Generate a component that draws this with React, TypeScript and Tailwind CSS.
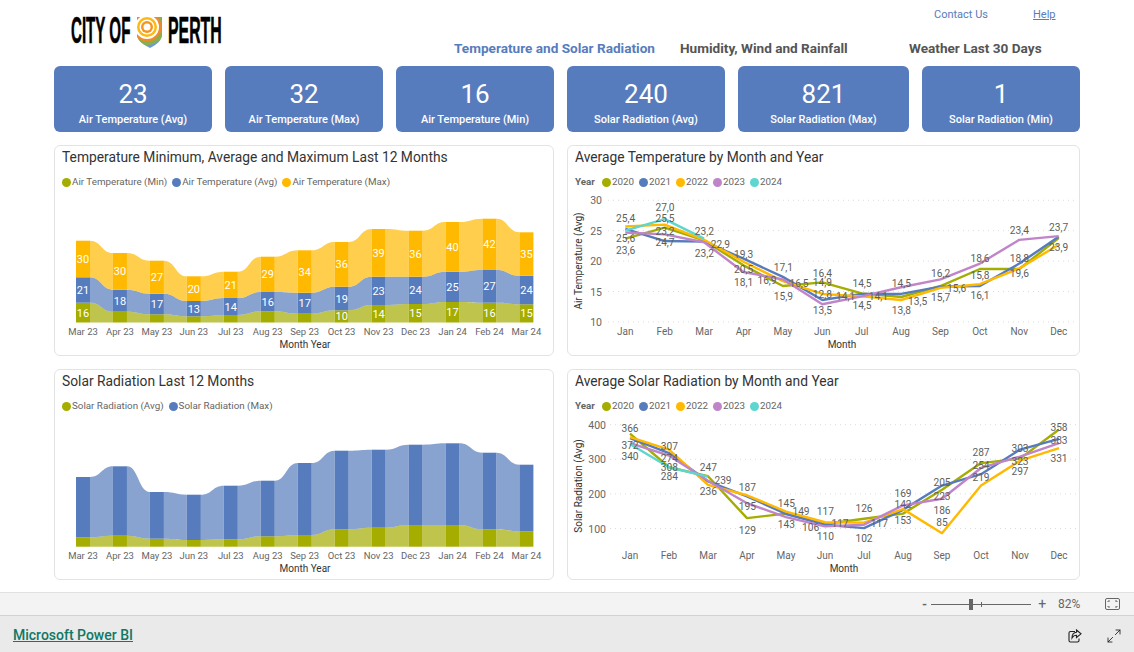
import { Maximize2 } from 'lucide-react';

const C = {
  green: '#a4ad00',
  blue: '#577cbd',
  yellow: '#ffb900',
  purple: '#c084c8',
  teal: '#5cd6cf',
};

const months12 = ['Mar 23', 'Apr 23', 'May 23', 'Jun 23', 'Jul 23', 'Aug 23', 'Sep 23', 'Oct 23', 'Nov 23', 'Dec 23', 'Jan 24', 'Feb 24', 'Mar 24'];
const monthNames = ['Jan', 'Feb', 'Mar', 'Apr', 'May', 'Jun', 'Jul', 'Aug', 'Sep', 'Oct', 'Nov', 'Dec'];
const kpis = [
  { value: '23', label: 'Air Temperature (Avg)', w: 'w-[158px]' },
  { value: '32', label: 'Air Temperature (Max)', w: 'w-[158px]' },
  { value: '16', label: 'Air Temperature (Min)', w: 'w-[158px]' },
  { value: '240', label: 'Solar Radiation (Avg)', w: 'w-[158px]' },
  { value: '821', label: 'Solar Radiation (Max)', w: 'w-[171px]' },
  { value: '1', label: 'Solar Radiation (Min)', w: 'w-[158px]' },
];

// ribbon tops, in page pixels
const tempBands = [
  { color: C.green, tops: [302.7, 311.7, 314.3, 316.3, 315, 311.3, 313.7, 310.3, 305, 304, 302, 302.7, 304.3] },
  { color: C.blue, tops: [277.3, 289.7, 293.7, 301, 298, 292, 292.7, 286.7, 276.7, 276.7, 271.7, 270, 275.7] },
  { color: C.yellow, tops: [240.7, 253, 260.7, 276.3, 271.7, 256.7, 250.3, 242, 229, 230.7, 222, 218.7, 232.3] },
];
const tempLabels = [
  ['16', '21', '30'], ['', '18', '30'], ['', '17', '27'], ['', '13', '20'], ['', '14', '21'], ['', '16', '29'], ['', '17', '34'],
  ['10', '19', '36'], ['14', '23', '39'], ['15', '24', '36'], ['17', '25', '40'], ['16', '27', '42'], ['15', '24', '35'],
];
const solarBands = [
  { color: C.green, tops: [537.3, 535.7, 538.7, 540, 539.3, 536.3, 535, 529.3, 527.7, 525, 525, 529.3, 531.3] },
  { color: C.blue, tops: [477, 466.3, 492, 494.7, 485.7, 480.7, 463, 450.7, 449.7, 444.7, 443.3, 452.7, 464.7] },
];

const tempLines = [
  { color: C.green, values: [23.7, 25.5, 23.4, 19.3, 15.9, 16.5, 14.7, 14.1, 15.9, 18.7, 18.7, 23.8] },
  { color: C.blue, values: [25.3, 23.3, 23.2, 20.4, 17.4, 13.6, 14.6, 14.6, 15.8, 15.9, 19.6, 24] },
  { color: C.yellow, values: [25.7, 26, 23.5, 19.9, 16.7, 14.6, 14.2, 13.6, 15.6, 16.2, 18.8, 22.7] },
  { color: C.purple, values: [24.7, 24.4, 23.1, 18.2, 17, 12.9, 14.2, 15.7, 17, 19.6, 23.5, 24.1] },
  { color: C.teal, values: [25, 26.9, 23.7] },
];
const solarLines = [
  { color: C.green, values: [374, 277, 251, 130, 143, 113, 128, 143, 212, 289, 302, 386] },
  { color: C.blue, values: [361, 318, 236, 193, 142, 111, 101, 154, 224, 257, 328, 359] },
  { color: C.yellow, values: [364, 328, 226, 196, 149, 118, 117, 156, 86, 224, 296, 332] },
  { color: C.purple, values: [347, 311, 238, 173, 133, 106, 111, 167, 186, 275, 308, 347] },
  { color: C.teal, values: [344, 277, 250] },
];

// label: text, x, y (page pixels, text centre)
const tempPoints: [string, number, number][] = [
  ['25,4', 625.7, 217.7], ['25,6', 625.7, 238], ['23,6', 625.7, 249.7], ['27,0', 665, 207.3], ['25,5', 665, 217.7], ['23,2', 665, 230.7], ['24,7', 665, 242.3],
  ['23,2', 704.3, 230.7], ['22,9', 720.3, 243.7], ['23,2', 704.3, 252.7], ['19,3', 743.7, 254.3], ['20,5', 743.7, 268.7], ['18,1', 743.7, 282.3], ['16,9', 767, 279.7],
  ['17,1', 783.3, 267.3], ['15,9', 783.3, 296.3], ['16,5', 799, 282.7], ['16,4', 822.3, 272.7], ['14,9', 822.3, 281.7], ['12,8', 822.3, 293.7], ['13,5', 822.3, 310.3],
  ['14,1', 845.7, 296.3], ['14,5', 862, 283.3], ['14,5', 862, 305], ['14,1', 878.3, 296.3], ['14,5', 901.3, 283.3], ['13,8', 901.3, 309.7], ['13,5', 917.7, 300.7],
  ['16,2', 940.7, 273.3], ['15,7', 940.7, 297.3], ['15,6', 956.7, 287.7], ['18,6', 980, 258.3], ['15,8', 980, 275.3], ['16,1', 980, 295.3], ['18,8', 1019.3, 257.7],
  ['19,6', 1019.3, 273.3], ['23,4', 1019.3, 229.7], ['23,7', 1058.7, 227.3], ['23,9', 1058.7, 247.3],
];
const solarPoints: [string, number, number][] = [
  ['366', 630, 427.7], ['372', 630, 444.7], ['340', 630, 455.7], ['307', 669.3, 445.7], ['274', 669.3, 457.7], ['308', 669.3, 467], ['284', 669.3, 475.7],
  ['247', 708.3, 466.7], ['239', 723, 480.3], ['236', 708.3, 491.3], ['187', 747.3, 487.3], ['195', 747.3, 506.3], ['129', 747.3, 529.7], ['145', 786.3, 502.7],
  ['149', 801, 511.3], ['143', 786.3, 523.7], ['106', 810.7, 526.7], ['117', 825.3, 511.3], ['110', 825.3, 535.7], ['117', 840, 522.7], ['126', 864, 508.3],
  ['102', 864, 538.3], ['117', 879.3, 522.7], ['169', 903, 493.3], ['142', 903, 503.7], ['153', 903, 520.3], ['205', 942, 481.7], ['223', 942, 496.3], ['186', 942, 509.7],
  ['85', 942, 522.3], ['287', 981, 452.3], ['254', 981, 464.7], ['219', 981, 476.7], ['303', 1020, 447.7], ['323', 1020, 461.3], ['297', 1020, 470.7],
  ['358', 1059, 427.3], ['383', 1059, 440.3], ['331', 1059, 458.3],
];

function Legend({ title, items }: { title?: string; items: { color: string; label: string }[] }) {
  return (
    <div className="flex items-center h-[14px] mt-[7px] mb-[3px] ml-[7px] text-[9.8px] text-[#666666]">
      {title && <span className="font-bold mr-[7px]">{title}</span>}
      {items.map(item => (
        <span key={item.label} className="flex items-center mr-[5px]">
          <span className="w-[9px] h-[9px] rounded-full mr-[1px]" style={{ backgroundColor: item.color }} />
          {item.label}
        </span>
      ))}
    </div>
  );
}

function Panel({ title, width, children }: { title: string; width: string; children: React.ReactNode }) {
  return (
    <div className={`${width} h-[211px] border border-[#e3e3e3] rounded-[6px] bg-white overflow-hidden`}>
      <div className="h-[22px] ml-[7px] text-[13.8px] leading-[22px] text-[#333333]">{title}</div>
      {children}
    </div>
  );
}

function RibbonChart({ bands, labels, viewY, baseline, axisY }: {
  bands: { color: string; tops: number[] }[];
  labels?: string[][];
  viewY: number;
  baseline: number;
  axisY: number;
}) {
  const barX = (i: number) => 76 + i * 36.95;
  const barW = 14;
  return (
    <svg className="block w-[498px] h-[164px]" viewBox={`55 ${viewY} 498 164`}>
      {bands.map((band, b) => {
        const bottoms = band.tops.map((_, i) => (b === 0 ? baseline : bands[b - 1].tops[i]));
        return (
          <g key={b}>
            {band.tops.slice(0, -1).map((top, i) => {
              const x1 = barX(i) + barW;
              const x2 = barX(i + 1);
              const m = (x1 + x2) / 2;
              const d = `M${x1} ${top}C${m} ${top} ${m} ${band.tops[i + 1]} ${x2} ${band.tops[i + 1]}L${x2} ${bottoms[i + 1]}C${m} ${bottoms[i + 1]} ${m} ${bottoms[i]} ${x1} ${bottoms[i]}Z`;
              return <path key={i} d={d} fill={band.color} fillOpacity={0.7} />;
            })}
            {band.tops.map((top, i) => (
              <rect key={i} x={barX(i)} y={top} width={barW} height={bottoms[i] - top} fill={band.color} />
            ))}
          </g>
        );
      })}
      {labels && labels.map((row, i) =>
        row.map((text, b) => {
          if (!text) return null;
          const top = bands[b].tops[i];
          const bottom = b === 0 ? baseline : bands[b - 1].tops[i];
          return (
            <text key={b} x={barX(i) + 7} y={(top + bottom) / 2 + 4} textAnchor="middle" fontSize="11" fill="#ffffff">{text}</text>
          );
        }),
      )}
      {months12.map((m, i) => (
        <text key={i} x={barX(i) + 7} y={axisY} textAnchor="middle" fontSize="9.5" fill="#666666">{m}</text>
      ))}
      <text x={305} y={axisY + 13} textAnchor="middle" fontSize="10" fill="#333333">Month Year</text>
    </svg>
  );
}

function LineChart({ lines, points, viewY, gridX1, firstX, stepX, ticks, toY, yTitle, yTitleY, tickX, axisY, titleX }: {
  lines: { color: string; values: number[] }[];
  points: [string, number, number][];
  viewY: number;
  gridX1: number;
  firstX: number;
  stepX: number;
  ticks: number[];
  toY: (v: number) => number;
  yTitle: string;
  yTitleY: number;
  tickX: number;
  axisY: number;
  titleX: number;
}) {
  return (
    <svg className="block w-[511px] h-[164px]" viewBox={`568 ${viewY} 511 164`}>
      {ticks.map(t => (
        <g key={t}>
          <line x1={gridX1} x2={1076} y1={toY(t)} y2={toY(t)} stroke="#dcdcdc" strokeDasharray="1 4" />
          <text x={tickX} y={toY(t) + 4} textAnchor="end" fontSize="10.5" fill="#666666">{t}</text>
        </g>
      ))}
      {lines.map(line => (
        <polyline
          key={line.color}
          points={line.values.map((v, i) => `${firstX + i * stepX},${toY(v)}`).join(' ')}
          fill="none"
          stroke={line.color}
          strokeWidth="2.4"
          strokeLinejoin="round"
        />
      ))}
      {points.map(([text, x, y], i) => (
        <text key={i} x={x} y={y + 4} textAnchor="middle" fontSize="10.2" fill="#605e5c">{text}</text>
      ))}
      {monthNames.map((m, i) => (
        <text key={m} x={firstX + i * stepX} y={axisY} textAnchor="middle" fontSize="10" fill="#666666">{m}</text>
      ))}
      <text x={titleX} y={axisY + 13} textAnchor="middle" fontSize="10" fill="#333333">Month</text>
      <text transform={`translate(582 ${yTitleY}) rotate(-90)`} textAnchor="middle" fontSize="10" fill="#333333">{yTitle}</text>
    </svg>
  );
}

function Logo() {
  return (
    <div className="flex items-center h-[36px] ml-[71px] mt-[13px] font-['Liberation_Sans',sans-serif] font-bold text-black text-[36px] leading-none">
      <span className="w-[62px] shrink-0 whitespace-nowrap origin-left scale-x-[0.42] [-webkit-text-stroke:0.6px_black]">CITY OF</span>
      <svg className="shrink-0 w-[26px] h-[31px] ml-[4px] mt-[3px]" viewBox="0 0 26 31">
        <defs>
          <clipPath id="shield">
            <path d="M0 0H25V17C25 24 19 28 13 31C7 28 0 24 0 17Z" />
          </clipPath>
        </defs>
        <g clipPath="url(#shield)">
          <rect width="26" height="31" fill="#6b9bd6" />
          <circle cx="10" cy="10" r="18" fill="#8ab04a" />
          <circle cx="10" cy="10" r="14.5" fill="#ee8a2c" />
          <circle cx="10" cy="10" r="12" fill="#ffffff" />
          <circle cx="10" cy="10" r="10" fill="#fdb913" />
          <circle cx="10" cy="10" r="7.5" fill="#ffffff" />
          <circle cx="10" cy="10" r="6" fill="#f7941d" />
          <circle cx="10" cy="10" r="3.5" fill="#ffffff" />
        </g>
      </svg>
      <span className="w-[53px] shrink-0 ml-[5px] whitespace-nowrap origin-left scale-x-[0.44] [-webkit-text-stroke:0.6px_black]">PERTH</span>
    </div>
  );
}

export default function App() {
  const years = [
    { color: C.green, label: '2020' },
    { color: C.blue, label: '2021' },
    { color: C.yellow, label: '2022' },
    { color: C.purple, label: '2023' },
    { color: C.teal, label: '2024' },
  ];
  return (
    <div className="w-[1134px] h-[652px] flex flex-col overflow-hidden bg-white font-['Roboto',sans-serif]">
      <div className="h-[592px] px-[54px]">
        {/* Header */}
        <div className="h-[66px] flex -mx-[54px]">
          <Logo />
          <div className="ml-auto flex flex-col w-[680px]">
            <div className="flex h-[31px] items-center text-[11px] text-[#577cbd]">
              <span className="ml-[480px]">Contact Us</span>
              <span className="ml-[45px] underline">Help</span>
            </div>
            <div className="flex mt-[7px] text-[13.6px] font-bold text-[#555555] whitespace-nowrap">
              <span className="text-[#577cbd] w-[226px]">Temperature and Solar Radiation</span>
              <span className="w-[229px]">Humidity, Wind and Rainfall</span>
              <span>Weather Last 30 Days</span>
            </div>
          </div>
        </div>

        {/* KPI cards */}
        <div className="flex gap-[13px]">
          {kpis.map(k => (
            <div key={k.label} className={`${k.w} h-[66px] rounded-[6px] bg-[#577cbd] text-white flex flex-col items-center`}>
              <div className="mt-[10px] text-[26px] leading-[36px]">{k.value}</div>
              <div className="text-[11px] font-medium leading-[15px]">{k.label}</div>
            </div>
          ))}
        </div>

        {/* Charts */}
        <div className="flex gap-[13px] mt-[13px]">
          <Panel width="w-[500px]" title="Temperature Minimum, Average and Maximum Last 12 Months">
            <Legend items={[
              { color: C.green, label: 'Air Temperature (Min)' },
              { color: C.blue, label: 'Air Temperature (Avg)' },
              { color: C.yellow, label: 'Air Temperature (Max)' },
            ]} />
            <RibbonChart bands={tempBands} labels={tempLabels} viewY={192} baseline={322.5} axisY={335} />
          </Panel>
          <Panel width="w-[513px]" title="Average Temperature by Month and Year">
            <Legend title="Year" items={years} />
            <LineChart
              lines={tempLines}
              points={tempPoints}
              viewY={192}
              gridX1={608}
              firstX={625.3}
              stepX={39.4}
              ticks={[30, 25, 20, 15, 10]}
              toY={v => 200.3 + (30 - v) * 6.08}
              yTitle="Air Temperature (Avg)"
              yTitleY={261}
              tickX={602}
              axisY={335}
              titleX={842}
            />
          </Panel>
        </div>
        <div className="flex gap-[13px] mt-[13px]">
          <Panel width="w-[500px]" title="Solar Radiation Last 12 Months">
            <Legend items={[
              { color: C.green, label: 'Solar Radiation (Avg)' },
              { color: C.blue, label: 'Solar Radiation (Max)' },
            ]} />
            <RibbonChart bands={solarBands} viewY={416} baseline={546.7} axisY={559} />
          </Panel>
          <Panel width="w-[513px]" title="Average Solar Radiation by Month and Year">
            <Legend title="Year" items={years} />
            <LineChart
              lines={solarLines}
              points={solarPoints}
              viewY={416}
              gridX1={610}
              firstX={630}
              stepX={39}
              ticks={[400, 300, 200, 100]}
              toY={v => 424.7 + (400 - v) * 0.346}
              yTitle="Solar Radiation (Avg)"
              yTitleY={486}
              tickX={606}
              axisY={559}
              titleX={844}
            />
          </Panel>
        </div>
      </div>

      {/* Zoom bar */}
      <div className="h-[23px] bg-[#f3f3f3] border-t border-[#e1e1e1] flex items-center text-[#666666]">
        <span className="ml-[922px] text-[13px] font-bold leading-none">-</span>
        <div className="relative w-[100px] h-px bg-[#666666] ml-[4px]">
          <span className="absolute left-[38px] -top-[5px] w-[4px] h-[11px] bg-[#666666]" />
          <span className="absolute left-[50px] -top-[2px] w-px h-[5px] bg-[#666666]" />
        </div>
        <span className="ml-[7px] text-[14px] leading-none">+</span>
        <span className="ml-[12px] text-[12px]">82%</span>
        <svg className="ml-[25px] w-[15px] h-[12px]" viewBox="0 0 15 12" fill="none" stroke="#666666">
          <rect x="0.5" y="0.5" width="14" height="11" rx="1.5" />
          <path d="M3 4V3H5M10 3H12V4M3 8V9H5M10 9H12V8" />
        </svg>
      </div>

      {/* Footer */}
      <div className="flex-1 bg-[#eaeaea] border-t border-[#d2d2d2] flex items-center pt-[3px]">
        <a className="ml-[13px] text-[14px] font-medium text-[#117865] underline">Microsoft Power BI</a>
        <svg className="ml-auto w-[14px] h-[14px]" viewBox="0 0 14 14" fill="none" stroke="#222222" strokeWidth="1.1">
          <path d="M7 2.5H2.5C1.5 2.5 1 3 1 4V11.5C1 12.5 1.5 13 2.5 13H9.5C10.5 13 11 12.5 11 11.5V9.5" />
          <path d="M8.5 1L13 4.8L8.5 8.5V6.3C6.5 6.3 5 7.2 4 9C4 6 5.5 3.6 8.5 3.3Z" />
        </svg>
        <Maximize2 className="ml-[24px] mr-[12px] w-[16px] h-[16px] text-[#222222]" strokeWidth={1.3} />
      </div>
    </div>
  );
}
